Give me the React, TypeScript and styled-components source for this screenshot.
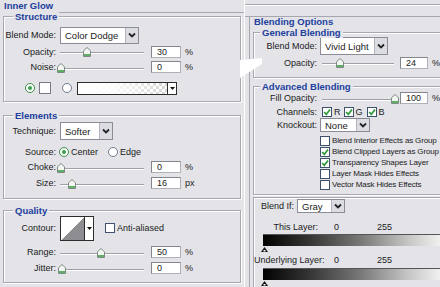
import React from 'react';
import styled, { createGlobalStyle } from 'styled-components';

const BG = '#e3e3e8';
const LINE = '#a7a7b0';
const BLUE = '#22409c';

const GlobalStyle = createGlobalStyle`
  html, body { margin: 0; padding: 0; background: ${BG}; }
  body {
    font-family: "Liberation Sans", Arial, sans-serif;
    font-size: 9px;
    color: #1b1b1b;
  }
`;

const Screen = styled.div`
  position: relative;
  display: flex;
  width: 440px;
  height: 287px;
  overflow: hidden;
  background: ${BG};
`;

const LeftPanel = styled.div`
  width: 245px;
  flex: none;
  box-sizing: border-box;
  padding-left: 3px;
  border-right: 1px solid #fff;
`;

const TitleRow = styled.div`
  display: flex;
  height: 13px;
`;

const PanelTitle = styled.div`
  font-weight: bold;
  color: ${BLUE};
  font-size: 9.5px;
  line-height: 11px;
  padding-left: 1px;
`;

const TitleLine = styled.div`
  flex: 1;
  margin-left: 5px;
  border-bottom: 1px solid ${LINE};
`;

const Group = styled.div<{ $h: number; $mt: number; $w?: number }>`
  position: relative;
  box-sizing: border-box;
  width: ${p => p.$w ?? 238}px;
  height: ${p => p.$h}px;
  margin-top: ${p => p.$mt}px;
  border: 1px solid ${LINE};
  box-shadow: inset 1px 1px 0 #fff, 1px 1px 0 #fff;
`;

const Legend = styled.span<{ $left?: number }>`
  position: absolute;
  top: -6px;
  left: ${p => p.$left ?? 9}px;
  padding: 0 2px;
  background: ${BG};
  font-weight: bold;
  color: ${BLUE};
  font-size: 9.5px;
  line-height: 11px;
  white-space: nowrap;
`;

const Row = styled.div<{ $h: number; $mt?: number; $pl?: number }>`
  display: flex;
  align-items: center;
  height: ${p => p.$h}px;
  margin-top: ${p => p.$mt ?? 0}px;
  padding-left: ${p => p.$pl ?? 0}px;
  white-space: nowrap;
`;

const Label = styled.div<{ $w: number; $mr?: number }>`
  width: ${p => p.$w}px;
  flex: none;
  margin-right: ${p => p.$mr ?? 4}px;
  text-align: right;
  white-space: nowrap;
`;

const Select = styled.div<{ $w: number; $h: number }>`
  display: flex;
  flex: none;
  box-sizing: border-box;
  width: ${p => p.$w}px;
  height: ${p => p.$h}px;
  background: #fff;
  border: 1px solid #8c8c96;
`;

const SelectText = styled.span`
  flex: 1;
  display: flex;
  align-items: center;
  padding-left: 4px;
  font-size: 9.5px;
`;

const SelectBtn = styled.span`
  width: 12px;
  display: flex;
  align-items: center;
  justify-content: center;
  background: #dcdce3;
  border-left: 1px solid #b4b4bc;
`;

const SliderTrack = styled.div<{ $w: number; $ml?: number }>`
  position: relative;
  flex: none;
  width: ${p => p.$w}px;
  height: 11px;
  margin-left: ${p => p.$ml ?? 0}px;
  &::before {
    content: '';
    position: absolute;
    left: 0;
    right: 0;
    top: 6px;
    height: 1px;
    background: #a0a0a8;
    box-shadow: 0 1px 0 #fff;
  }
`;

const ThumbSvg = styled.svg`
  position: absolute;
  top: 1px;
`;

const Field = styled.div<{ $w?: number; $ml?: number }>`
  box-sizing: border-box;
  flex: none;
  width: ${p => p.$w ?? 30}px;
  height: 12px;
  margin-left: ${p => p.$ml ?? 7}px;
  padding-left: 5px;
  background: #fff;
  border: 1px solid #b0b0b8;
  border-top-color: #85858e;
  border-left-color: #85858e;
  font-size: 9px;
  line-height: 10px;
`;

const Unit = styled.span`
  margin-left: 4px;
`;

const Radio = styled.span<{ $on?: boolean }>`
  position: relative;
  flex: none;
  box-sizing: border-box;
  width: 10px;
  height: 10px;
  border-radius: 50%;
  border: 1px solid ${p => (p.$on ? '#3b8f48' : '#6d7c8e')};
  background: #fff;
  &::after {
    content: '';
    display: ${p => (p.$on ? 'block' : 'none')};
    position: absolute;
    inset: 2px;
    border-radius: 50%;
    background: #3aa04a;
  }
`;

const Check = styled.span`
  flex: none;
  box-sizing: border-box;
  width: 10px;
  height: 10px;
  border: 1px solid #3e516a;
  background: #fff;
  display: flex;
  align-items: center;
  justify-content: center;
`;

const Text = styled.span<{ $ml?: number }>`
  margin-left: ${p => p.$ml ?? 2}px;
`;

const Swatch = styled.span<{ $ml: number }>`
  flex: none;
  box-sizing: border-box;
  width: 12px;
  height: 12px;
  margin-left: ${p => p.$ml}px;
  background: #fff;
  border: 1px solid #7b7b84;
`;

const GradientPick = styled.div`
  display: flex;
  flex: none;
  box-sizing: border-box;
  width: 100px;
  height: 13px;
  margin-left: 5px;
  border: 1px solid #2c2c2c;
`;

const GradientFill = styled.span`
  flex: 1;
  background:
    linear-gradient(to right, #fff 0%, rgba(255, 255, 255, 0.9) 40%, rgba(255, 255, 255, 0) 100%),
    repeating-conic-gradient(#d4d4d4 0 25%, #fff 0 50%) 0 0 / 6px 6px;
`;

const PickBtn = styled.span`
  width: 8px;
  display: flex;
  align-items: center;
  justify-content: center;
  background: #fff;
  border-left: 1px solid #2c2c2c;
`;

const ContourPick = styled.div`
  display: flex;
  flex: none;
  box-sizing: border-box;
  width: 34px;
  height: 25px;
  border: 1px solid #2c2c2c;
  background: #fff;
`;

const ContourShape = styled.span`
  flex: 1;
  background: linear-gradient(to top left, #8d8d92 50%, #fff 50%);
`;

const RightPanel = styled.div`
  flex: 1;
  min-width: 0;
  display: flex;
  flex-direction: column;
`;

const TopStrip = styled.div`
  flex: none;
  box-sizing: border-box;
  height: 13px;
  margin-top: 4px;
  border-top: 1px solid ${LINE};
  border-bottom: 1px solid ${LINE};
  box-shadow: inset 0 1px 0 #fff;
`;

const RightBody = styled.div`
  flex: 1;
  margin-left: 4px;
  padding-left: 3px;
  border-left: 1px solid ${LINE};
`;

const SectionTitle = styled.div`
  font-weight: bold;
  color: ${BLUE};
  font-size: 9.5px;
  line-height: 10px;
  margin-left: 1px;
`;

const CheckList = styled.div`
  display: flex;
  flex-direction: column;
  margin-top: 3px;
  padding-left: 66px;
  font-size: 8px;
  letter-spacing: -0.15px;
`;

const Value = styled.span<{ $w?: number; $ml?: number }>`
  display: inline-block;
  width: ${p => (p.$w ? `${p.$w}px` : 'auto')};
  margin-left: ${p => p.$ml ?? 0}px;
`;

const RangeBar = styled.div<{ $mt: number }>`
  flex: none;
  box-sizing: border-box;
  width: 180px;
  height: 12px;
  margin-top: ${p => p.$mt}px;
  margin-left: 9px;
  border-top: 1px solid #555;
  background: linear-gradient(to right, #020202 0%, #333 25%, #7a7a7a 55%, #c4c4c4 80%, #f4f4f4 100%);
`;

const RangeThumbs = styled.div`
  display: flex;
  height: 6px;
  margin-top: 1px;
  margin-left: 7px;
`;

const Overlay = styled.svg`
  position: absolute;
  left: 0;
  top: 0;
  pointer-events: none;
`;

const Chevron = () => (
  <svg width="8" height="6" viewBox="0 0 8 6">
    <polyline points="1,1.5 4,4.5 7,1.5" fill="none" stroke="#222" strokeWidth="1.8" />
  </svg>
);

const TinyArrow = () => (
  <svg width="5" height="3" viewBox="0 0 5 3">
    <polygon points="0,0 5,0 2.5,3" fill="#111" />
  </svg>
);

const Tick = () => (
  <svg width="8" height="8" viewBox="0 0 8 8">
    <polyline points="1.2,4 3.3,6.3 7,1.4" fill="none" stroke="#2f9b3d" strokeWidth="1.7" />
  </svg>
);

const Slider = ({ w, at, ml }: { w: number; at: number; ml?: number }) => (
  <SliderTrack $w={w} $ml={ml}>
    <ThumbSvg width="8" height="10" viewBox="0 0 8 10" style={{ left: at - 4 }}>
      <path d="M4 0.5 L7.5 3.8 V9.5 H0.5 V3.8 Z" fill="#f2f5f0" stroke="#7d8a86" strokeWidth="1" />
      <rect x="1" y="7" width="6" height="2" fill="#5fae66" />
    </ThumbSvg>
  </SliderTrack>
);

const MiniThumb = () => (
  <svg width="7" height="6" viewBox="0 0 7 6">
    <polygon points="3.5,0 7,5 0,5" fill="#111" />
    <rect x="2.5" y="3" width="2" height="1.5" fill="#fff" />
  </svg>
);

const SelectBox = ({ w, h, value }: { w: number; h: number; value: string }) => (
  <Select $w={w} $h={h}>
    <SelectText>{value}</SelectText>
    <SelectBtn>
      <Chevron />
    </SelectBtn>
  </Select>
);

const blendChecks = [
  { label: 'Blend Interior Effects as Group', on: false },
  { label: 'Blend Clipped Layers as Group', on: true },
  { label: 'Transparency Shapes Layer', on: true },
  { label: 'Layer Mask Hides Effects', on: false },
  { label: 'Vector Mask Hides Effects', on: false },
];

export default function App() {
  return (
    <Screen>
      <GlobalStyle />
      <LeftPanel>
        <TitleRow>
          <PanelTitle>Inner Glow</PanelTitle>
          <TitleLine />
        </TitleRow>

        <Group $h={86} $mt={3}>
          <Legend>Structure</Legend>
          <Row $h={18} $mt={9}>
            <Label $w={52}>Blend Mode:</Label>
            <SelectBox w={79} h={17} value="Color Dodge" />
          </Row>
          <Row $h={15}>
            <Label $w={52}>Opacity:</Label>
            <Slider w={84} at={27} />
            <Field>30</Field>
            <Unit>%</Unit>
          </Row>
          <Row $h={16}>
            <Label $w={52}>Noise:</Label>
            <Slider w={84} at={1} />
            <Field>0</Field>
            <Unit>%</Unit>
          </Row>
          <Row $h={14} $mt={6} $pl={21}>
            <Radio $on />
            <Swatch $ml={4} />
            <Radio style={{ marginLeft: 11 }} />
            <GradientPick>
              <GradientFill />
              <PickBtn>
                <TinyArrow />
              </PickBtn>
            </GradientPick>
          </Row>
        </Group>

        <Group $h={84} $mt={13}>
          <Legend>Elements</Legend>
          <Row $h={18} $mt={6}>
            <Label $w={52}>Technique:</Label>
            <SelectBox w={53} h={18} value="Softer" />
          </Row>
          <Row $h={14} $mt={5}>
            <Label $w={52} $mr={3}>Source:</Label>
            <Radio $on />
            <Text $ml={2}>Center</Text>
            <Radio style={{ marginLeft: 10 }} />
            <Text $ml={2}>Edge</Text>
          </Row>
          <Row $h={16}>
            <Label $w={52}>Choke:</Label>
            <Slider w={84} at={1} />
            <Field>0</Field>
            <Unit>%</Unit>
          </Row>
          <Row $h={16}>
            <Label $w={52}>Size:</Label>
            <Slider w={84} at={12} />
            <Field>16</Field>
            <Unit>px</Unit>
          </Row>
        </Group>

        <Group $h={73} $mt={11}>
          <Legend>Quality</Legend>
          <Row $h={26} $mt={4}>
            <Label $w={52}>Contour:</Label>
            <ContourPick>
              <ContourShape />
              <PickBtn>
                <TinyArrow />
              </PickBtn>
            </ContourPick>
            <Check style={{ marginLeft: 11 }} />
            <Text $ml={2}>Anti-aliased</Text>
          </Row>
          <Row $h={16} $mt={3}>
            <Label $w={52}>Range:</Label>
            <Slider w={84} at={41} />
            <Field>50</Field>
            <Unit>%</Unit>
          </Row>
          <Row $h={16}>
            <Label $w={52}>Jitter:</Label>
            <Slider w={84} at={2} />
            <Field>0</Field>
            <Unit>%</Unit>
          </Row>
        </Group>
      </LeftPanel>

      <RightPanel>
        <TopStrip />
        <RightBody>
          <SectionTitle>Blending Options</SectionTitle>

          <Group $w={200} $h={46} $mt={5}>
            <Legend $left={6}>General Blending</Legend>
            <Row $h={18} $mt={4}>
              <Label $w={63} $mr={3}>Blend Mode:</Label>
              <SelectBox w={68} h={18} value="Vivid Light" />
            </Row>
            <Row $h={15}>
              <Label $w={63} $mr={3}>Opacity:</Label>
              <Slider w={72} at={18} ml={2} />
              <Field $w={28} $ml={6}>24</Field>
              <Unit>%</Unit>
            </Row>
          </Group>

          <Group $w={200} $h={109} $mt={8}>
            <Legend $left={6}>Advanced Blending</Legend>
            <Row $h={14} $mt={4}>
              <Label $w={63} $mr={3}>Fill Opacity:</Label>
              <Slider w={72} at={73} ml={2} />
              <Field $w={28} $ml={6}>100</Field>
              <Unit>%</Unit>
            </Row>
            <Row $h={13}>
              <Label $w={63} $mr={3}>Channels:</Label>
              <Check style={{ marginLeft: 2 }}>
                <Tick />
              </Check>
              <Text $ml={2}>R</Text>
              <Check style={{ marginLeft: 3 }}>
                <Tick />
              </Check>
              <Text $ml={2}>G</Text>
              <Check style={{ marginLeft: 4 }}>
                <Tick />
              </Check>
              <Text $ml={2}>B</Text>
            </Row>
            <Row $h={14}>
              <Label $w={63} $mr={3}>Knockout:</Label>
              <SelectBox w={50} h={14} value="None" />
            </Row>
            <CheckList>
              {blendChecks.map(c => (
                <Row $h={11} key={c.label}>
                  <Check>{c.on && <Tick />}</Check>
                  <Text $ml={2}>{c.label}</Text>
                </Row>
              ))}
            </CheckList>
          </Group>

          <Group $w={200} $h={100} $mt={2}>
            <Row $h={14} $mt={1}>
              <Label $w={40} $mr={3}>Blend If:</Label>
              <SelectBox w={48} h={14} value="Gray" />
            </Row>
            <Row $h={14} $mt={7}>
              <Label $w={64} $mr={0}>This Layer:</Label>
              <Value $ml={16} $w={43}>0</Value>
              <Value>255</Value>
            </Row>
            <RangeBar $mt={0} />
            <RangeThumbs>
              <MiniThumb />
            </RangeThumbs>
            <Row $h={14}>
              <Label $w={64} $mr={0}>Underlying Layer:</Label>
              <Value $ml={16} $w={43}>0</Value>
              <Value>255</Value>
            </Row>
            <RangeBar $mt={1} />
            <RangeThumbs>
              <MiniThumb />
            </RangeThumbs>
          </Group>
        </RightBody>
      </RightPanel>

      <Overlay width="440" height="287" viewBox="0 0 440 287">
        <polygon points="240,60 262,58 262,64 240,78" fill="#fff" />
      </Overlay>
    </Screen>
  );
}
